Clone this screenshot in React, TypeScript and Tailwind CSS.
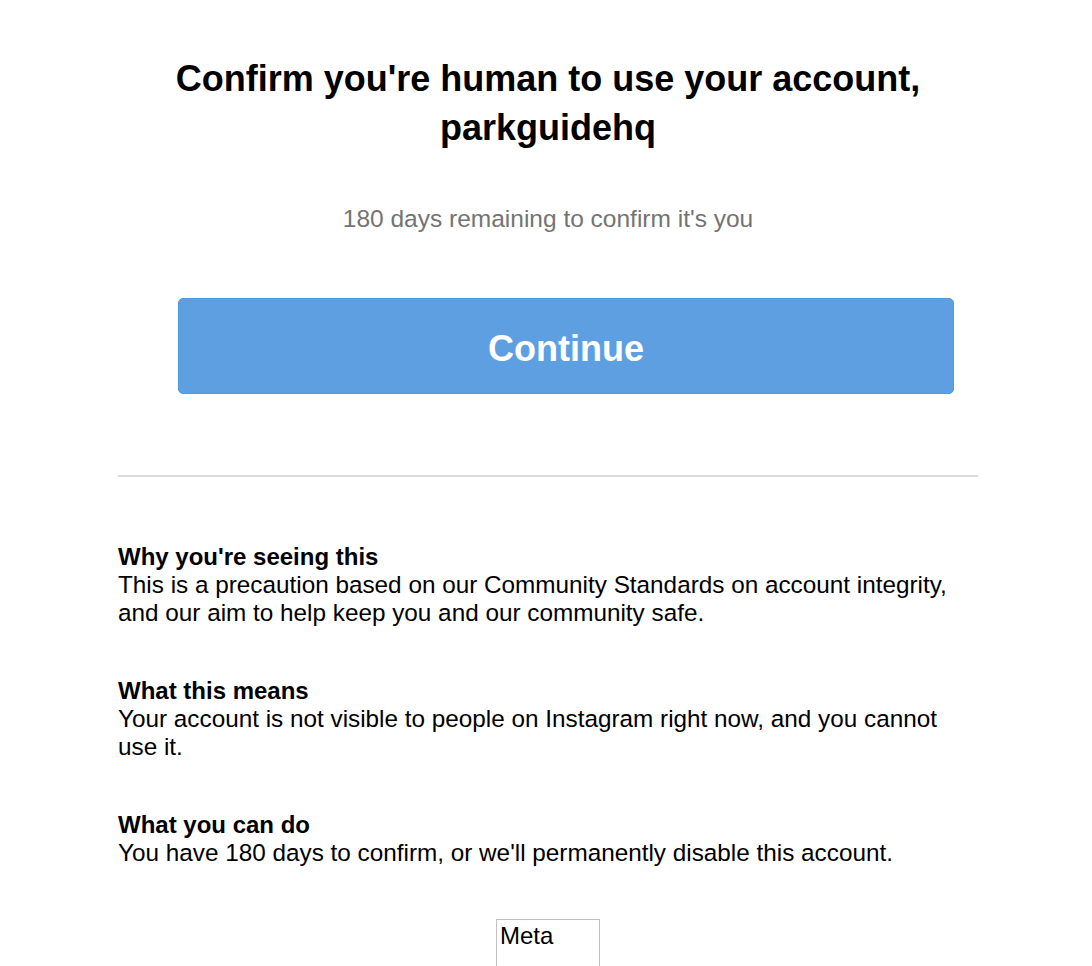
export default function App() {
  return (
    <div className="min-h-[966px] bg-white text-black overflow-hidden" style={{ fontFamily: '"Liberation Sans", Arial, sans-serif' }}>
      <div className="w-[860px] ml-[118px] pt-[54px]">
        <h1 className="text-center text-[36px] leading-[49px] font-bold">
          Confirm you're human to use your account,
          <br />
          parkguidehq
        </h1>
        <p className="mt-[53px] text-center text-[24.5px] leading-[28px] text-[#737373]">
          180 days remaining to confirm it's you
        </p>
        <div className="mt-[65px] pl-[60px]">
          <button className="w-[776px] h-[96px] pt-[6px] rounded-[5px] bg-[#5e9fe2] border border-[#4a9ae0] text-white text-[36px] font-bold">
            Continue
          </button>
        </div>
        <div className="mt-[81px] h-[2px] bg-[#dbdbdb]" />
        <div className="mt-[66px] text-[24.3px] leading-[28px]">
          <div>
            <div className="font-bold text-[24px]">Why you're seeing this</div>
            <div>This is a precaution based on our Community Standards on account integrity, and our aim to help keep you and our community safe.</div>
          </div>
          <div className="mt-[50px]">
            <div className="font-bold text-[24px]">What this means</div>
            <div>Your account is not visible to people on Instagram right now, and you cannot use it.</div>
          </div>
          <div className="mt-[50px]">
            <div className="font-bold text-[24px]">What you can do</div>
            <div>You have 180 days to confirm, or we'll permanently disable this account.</div>
          </div>
        </div>
        <div className="mt-[52px] flex justify-center">
          <div className="w-[104px] h-[80px] border border-[#c0c0c0] pl-[3px] text-[24px] leading-[32px]">Meta</div>
        </div>
      </div>
    </div>
  );
}
